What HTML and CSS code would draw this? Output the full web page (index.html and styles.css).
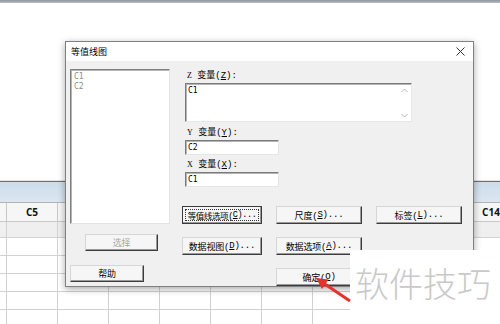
FILE: index.html
```html
<!DOCTYPE html>
<html lang="zh-CN">
<head>
    <meta charset="UTF-8">
    <title>等值线图</title>
    <link rel="stylesheet" href="styles.css">
</head>
<body>
    <div class="screen">
        <div class="top-rule"></div>
        <div class="page-blank"></div>

        <div class="sheet">
            <div class="sheet-band"></div>
            <div class="sheet-row sheet-head">
                <div class="cell"></div><div class="cell">C5</div><div class="cell"></div><div class="cell"></div><div class="cell"></div><div class="cell"></div><div class="cell"></div><div class="cell"></div><div class="cell"></div><div class="cell"></div><div class="cell">C14</div>
            </div>
            <div class="sheet-row sheet-names">
                <div class="cell"></div><div class="cell"></div><div class="cell"></div><div class="cell"></div><div class="cell"></div><div class="cell"></div><div class="cell"></div><div class="cell"></div><div class="cell"></div><div class="cell"></div><div class="cell"></div>
            </div>
            <div class="sheet-row">
                <div class="cell"></div><div class="cell"></div><div class="cell"></div><div class="cell"></div><div class="cell"></div><div class="cell"></div><div class="cell"></div><div class="cell"></div><div class="cell"></div><div class="cell"></div><div class="cell"></div>
            </div>
            <div class="sheet-row">
                <div class="cell"></div><div class="cell"></div><div class="cell"></div><div class="cell"></div><div class="cell"></div><div class="cell"></div><div class="cell"></div><div class="cell"></div><div class="cell"></div><div class="cell"></div><div class="cell"></div>
            </div>
            <div class="sheet-row">
                <div class="cell"></div><div class="cell"></div><div class="cell"></div><div class="cell"></div><div class="cell"></div><div class="cell"></div><div class="cell"></div><div class="cell"></div><div class="cell"></div><div class="cell"></div><div class="cell"></div>
            </div>
            <div class="sheet-row">
                <div class="cell"></div><div class="cell"></div><div class="cell"></div><div class="cell"></div><div class="cell"></div><div class="cell"></div><div class="cell"></div><div class="cell"></div><div class="cell"></div><div class="cell"></div><div class="cell"></div>
            </div>
            <div class="sheet-row">
                <div class="cell"></div><div class="cell"></div><div class="cell"></div><div class="cell"></div><div class="cell"></div><div class="cell"></div><div class="cell"></div><div class="cell"></div><div class="cell"></div><div class="cell"></div><div class="cell"></div>
            </div>
        </div>

        <div class="dialog">
            <div class="dialog-title">
                <span>等值线图</span>
                <svg class="close" width="9" height="9" viewBox="0 0 9 9">
                    <path d="M0.5 0.5 L8.5 8.5 M8.5 0.5 L0.5 8.5" stroke="#333" stroke-width="1" fill="none"/>
                </svg>
            </div>

            <div class="dialog-body">
                <div class="left-col">
                    <div class="listbox">
                        <div>C1</div>
                        <div>C2</div>
                    </div>
                    <button class="btn btn-select" disabled>选择</button>
                    <button class="btn btn-help">帮助</button>
                </div>

                <div class="right-col">
                    <div class="fields">
                        <div class="field-label label-z"><span class="var">Z</span> 变量(<u>Z</u>):</div>
                        <div class="textbox textbox-z">
                            <div class="textbox-value">C1</div>
                            <div class="scroll">
                                <svg width="7" height="5" viewBox="0 0 7 5"><path d="M0.5 4 L3.5 1 L6.5 4" stroke="#b5b5b5" fill="none"/></svg>
                                <svg width="7" height="5" viewBox="0 0 7 5"><path d="M0.5 1 L3.5 4 L6.5 1" stroke="#b5b5b5" fill="none"/></svg>
                            </div>
                        </div>
                        <div class="field-label label-y"><span class="var">Y</span> 变量(<u>Y</u>):</div>
                        <div class="textbox textbox-small"><div class="textbox-value">C2</div></div>
                        <div class="field-label label-x"><span class="var">X</span> 变量(<u>X</u>):</div>
                        <div class="textbox textbox-small"><div class="textbox-value">C1</div></div>
                    </div>

                    <div class="button-grid">
                        <button class="btn btn-focus"><span class="focus-ring">等值线选项(<u>C</u>)...</span></button>
                        <button class="btn">尺度(<u>S</u>)...</button>
                        <button class="btn">标签(<u>L</u>)...</button>
                        <button class="btn">数据视图(<u>D</u>)...</button>
                        <button class="btn">数据选项(<u>A</u>)...</button>
                        <div></div>
                        <div></div>
                        <button class="btn">确定(<u>O</u>)</button>
                    </div>
                </div>
            </div>
        </div>

        <div class="watermark">软件技巧</div>

        <svg class="arrow" width="60" height="40" viewBox="0 0 60 40">
            <path d="M50 31 L24 13.5" stroke="#e4322d" stroke-width="3" fill="none"/>
            <polygon points="16,8 28.5,9.5 22,19" fill="#e4322d"/>
        </svg>
    </div>
</body>
</html>
```

FILE: styles.css
```css
* {
    box-sizing: border-box;
}
body {
    margin: 0;
    background-color: #fff;
    font-family: "Noto Sans CJK SC", sans-serif;
}
.screen {
    position: relative;
    width: 500px;
    height: 324px;
    overflow: hidden;
}
.top-rule {
    height: 3px;
    background: linear-gradient(to bottom, #8e959d, #b8bdc3);
}
.page-blank {
    height: 177px;
}

/* worksheet behind the dialog */
.sheet-band {
    height: 23px;
    border-top: 1px solid #e2e2e2;
    border-bottom: 1px solid #b4b4b4;
    background: linear-gradient(to bottom, #cddcea, #dbe6f1);
    box-shadow: inset 0 1px 0 #707070;
}
.sheet-row {
    display: grid;
    grid-template-columns: 7px repeat(10, 51px);
}
.cell {
    height: 18px;
    border-right: 1px solid #d2d2d2;
    border-bottom: 1px solid #d2d2d2;
}
.sheet-head .cell {
    height: 19px;
    background-color: #f6f6f6;
    border-color: #c8c8c8;
    font-family: "Open Sans", sans-serif;
    font-weight: bold;
    font-size: 10px;
    line-height: 18px;
    text-align: center;
    color: #111;
}
.sheet-names .cell {
    height: 16px;
    background-color: #efefef;
}

/* dialog */
.dialog {
    position: absolute;
    left: 65px;
    top: 41px;
    width: 409px;
    height: 246px;
    background-color: #f0f0f0;
    border: 1px solid #808080;
    box-shadow: 0 2px 7px rgba(0,0,0,0.35);
}
.dialog-title {
    height: 19px;
    background-color: #fff;
    padding: 0 8px 0 5px;
    display: flex;
    align-items: center;
    justify-content: space-between;
    font-size: 9px;
    color: #000;
}
.dialog-body {
    display: flex;
    padding: 8px 0 0 4px;
}
.left-col {
    width: 100px;
    display: flex;
    flex-direction: column;
}
.listbox {
    height: 155px;
    background-color: #fff;
    border: 1px solid;
    border-color: #7f7f7f #e3e3e3 #e3e3e3 #7f7f7f;
    box-shadow: inset 1px 1px 0 #b4b4b4;
    padding: 2px 0 0 3px;
    font-family: "DejaVu Sans Mono", monospace;
    font-size: 8px;
    line-height: 10px;
    color: #8c8c8c;
}
.right-col {
    margin-left: 12px;
    display: flex;
    flex-direction: column;
}
.fields {
    margin-left: 3px;
}
.field-label {
    padding-left: 2px;
    font-family: "Liberation Mono", "Noto Sans CJK SC", monospace;
    font-size: 9px;
    line-height: 13px;
    color: #000;
}
.field-label .var {
    font-family: "Liberation Serif", serif;
    font-size: 8px;
}
.label-y {
    padding-top: 4px;
}
.label-x {
    padding-top: 3px;
}
.textbox {
    background-color: #fff;
    border: 1px solid;
    border-color: #7a7a7a #e6e6e6 #e6e6e6 #7a7a7a;
    box-shadow: inset 1px 1px 0 #b4b4b4;
    font-family: "DejaVu Sans Mono", monospace;
    font-size: 8px;
    line-height: 10px;
    color: #000;
}
.textbox-value {
    padding: 2px 0 0 2px;
}
.textbox-z {
    width: 227px;
    height: 39px;
    display: flex;
    justify-content: space-between;
}
.scroll {
    width: 14px;
    display: flex;
    flex-direction: column;
    justify-content: space-between;
    align-items: center;
    padding: 4px 0 3px;
}
.textbox-small {
    width: 94px;
    height: 15px;
}
.button-grid {
    margin-top: 19px;
    display: grid;
    grid-template-columns: 80px 86px 86px;
    grid-auto-rows: 18px;
    column-gap: 14px;
    row-gap: 13px;
}

/* classic 3d buttons */
.btn {
    height: 18px;
    padding: 0;
    margin: 0;
    background-color: #f6f6f6;
    border: 1px solid;
    border-color: #d6d6d6 #3c3c3c #3c3c3c #d6d6d6;
    box-shadow: inset -1px -1px 0 #9a9a9a;
    font-family: "Liberation Mono", "Noto Sans CJK SC", monospace;
    font-size: 9px;
    letter-spacing: -0.2px;
    white-space: nowrap;
    color: #000;
    display: flex;
    align-items: center;
    justify-content: center;
}
.btn:disabled {
    color: #a8a8a8;
}
.btn-select {
    width: 73px;
    height: 17px;
    margin: 10px 0 0 15px;
}
.btn-help {
    width: 74px;
    height: 17px;
    margin-top: 14px;
}
.btn-focus {
    border-color: #3c3c3c;
    padding: 2px;
}
.focus-ring {
    width: 100%;
    height: 100%;
    border: 1px dotted #333;
    font-size: 8.5px;
    letter-spacing: -0.4px;
    display: flex;
    align-items: center;
    justify-content: center;
}

/* overlays from the screenshot */
.watermark {
    position: absolute;
    left: 350px;
    top: 250px;
    width: 150px;
    height: 74px;
    background-color: #fff;
    padding: 16px 0 0 5px;
    font-family: "Noto Sans CJK SC", sans-serif;
    font-weight: 300;
    font-size: 34px;
    line-height: 34px;
    color: #c9c9c9;
    white-space: nowrap;
}
.arrow {
    position: absolute;
    left: 300px;
    top: 270px;
}
```
